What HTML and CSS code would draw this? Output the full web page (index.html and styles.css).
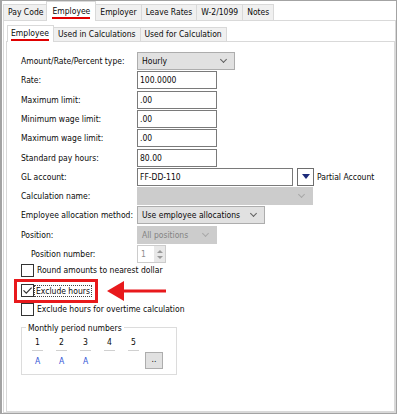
FILE: index.html
```html
<!DOCTYPE html>
<html lang="en">
<head>
<meta charset="UTF-8" />
<title>Pay Code - Employee</title>
<link rel="stylesheet" href="styles.css">
</head>
<body>
<div class="window">
  <!-- Top tabs -->
  <div class="tabs">
    <div class="tab">Pay Code</div>
    <div class="tab active"><span class="mark">Employee</span></div>
    <div class="tab">Employer</div>
    <div class="tab">Leave Rates</div>
    <div class="tab">W-2/1099</div>
    <div class="tab">Notes</div>
  </div>

  <div class="panel">
    <!-- Sub tabs -->
    <div class="tabs sub">
      <div class="tab active"><span class="mark">Employee</span></div>
      <div class="tab">Used in Calculations</div>
      <div class="tab">Used for Calculation</div>
    </div>

    <div class="inner">
      <div class="row">
        <label>Amount/Rate/Percent type:</label>
        <div class="select w98"><span>Hourly</span><i class="chev"></i></div>
      </div>
      <div class="row">
        <label>Rate:</label>
        <div class="input w80">100.0000</div>
      </div>
      <div class="row">
        <label>Maximum limit:</label>
        <div class="input w80">.00</div>
      </div>
      <div class="row">
        <label>Minimum wage limit:</label>
        <div class="input w80">.00</div>
      </div>
      <div class="row">
        <label>Maximum wage limit:</label>
        <div class="input w80">.00</div>
      </div>
      <div class="row">
        <label>Standard pay hours:</label>
        <div class="input w80">80.00</div>
      </div>
      <div class="row">
        <label>GL account:</label>
        <div class="input w156">FF-DD-110</div>
        <div class="drop-btn"><i class="tri"></i></div>
        <span class="note">Partial Account</span>
      </div>
      <div class="row">
        <label>Calculation name:</label>
        <div class="select disabled w176"><span></span><i class="chev"></i></div>
      </div>
      <div class="row">
        <label>Employee allocation method:</label>
        <div class="select w128"><span>Use employee allocations</span><i class="chev"></i></div>
      </div>
      <div class="row">
        <label>Position:</label>
        <div class="select disabled w80"><span>All positions</span><i class="chev"></i></div>
      </div>
      <div class="row">
        <label class="indent">Position number:</label>
        <div class="spin">
          <span>1</span>
          <div class="arrows"><i class="up"></i><i class="down"></i></div>
        </div>
      </div>

      <div class="check-row">
        <span class="box"></span>
        <span class="text">Round amounts to nearest dollar</span>
      </div>
      <div class="callout-row">
        <div class="callout">
          <span class="box">
            <svg width="11" height="11" viewBox="0 0 11 11"><path d="M1.5 5.3 L4.3 8.1 L9.6 2.6" fill="none" stroke="#333" stroke-width="1.2"/></svg>
          </span>
          <span class="focus">Exclude hours</span>
        </div>
        <svg class="arrow" width="60" height="20" viewBox="0 0 60 20">
          <polygon points="0,10 17,0 17,20" fill="#e8191c"/>
          <rect x="16" y="8.5" width="43" height="3" fill="#e8191c"/>
        </svg>
      </div>
      <div class="check-row">
        <span class="box"></span>
        <span class="text">Exclude hours for overtime calculation</span>
      </div>

      <fieldset class="group">
        <legend>Monthly period numbers</legend>
        <div class="periods">
          <div class="period"><span class="num">1</span><span class="val">A</span></div>
          <div class="period"><span class="num">2</span><span class="val">A</span></div>
          <div class="period"><span class="num">3</span><span class="val">A</span></div>
          <div class="period"><span class="num">4</span><span class="val"></span></div>
          <div class="period"><span class="num">5</span><span class="val"></span></div>
          <div class="more">..</div>
        </div>
      </fieldset>
    </div>
  </div>
</div>
</body>
</html>
```

FILE: styles.css
```css
* {
  box-sizing: border-box;
  margin: 0;
  padding: 0;
}
body {
  background: #fff;
  font-family: 'DejaVu Sans Condensed', 'DejaVu Sans', sans-serif;
  font-stretch: condensed;
  font-size: 8.5px;
  color: #0a0a0a;
}
.window {
  width: 397px;
  height: 414px;
  border: 1px solid #a3a3a3;
  border-left-width: 2px;
  display: flex;
  flex-direction: column;
  overflow: hidden;
}

/* Tabs */
.tabs {
  display: flex;
  align-items: flex-end;
  height: 19px;
  padding-left: 1px;
  position: relative;
  z-index: 1;
}
.tab {
  height: 16px;
  padding: 0 4px;
  line-height: 14px;
  background: #f0f0f0;
  border: 1px solid #d9d9d9;
  border-bottom: none;
  margin-right: -1px;
  white-space: nowrap;
}
.tab.active {
  height: 20px;
  background: #fff;
  margin: 0 -1px -1px -1px;
  padding: 3px 5px 0;
  line-height: normal;
  position: relative;
  z-index: 2;
}
.mark {
  display: inline-block;
  line-height: 12px;
  border-bottom: 2px solid #e00000;
}
.panel {
  flex: 1;
  margin-left: 1px;
  border: 1px solid #d9d9d9;
  background: #fff;
  padding: 1px 0 0 2px;
  display: flex;
  flex-direction: column;
}
.tabs.sub {
  height: 19px;
}
.tabs.sub .tab {
  height: 14px;
  line-height: 13px;
  padding: 0 4px;
}
.tabs.sub .tab.active {
  height: 17px;
  margin-left: 0;
  padding: 2px 4px 0 3px;
  line-height: normal;
}
.tabs.sub .mark {
  line-height: 11px;
}
.inner {
  flex: 1;
  border: 1px solid #d9d9d9;
  padding: 9.4px 0 0 14px;
}

/* Form rows */
.row {
  display: flex;
  align-items: center;
  height: 19.3px;
}
.row label {
  width: 116px;
  flex: none;
  white-space: nowrap;
}
.row label.indent {
  padding-left: 10px;
}
.input {
  height: 18px;
  border: 1px solid #7a7a7a;
  background: #fff;
  padding: 0 2px;
  line-height: 16px;
}
.select {
  height: 18px;
  border: 1px solid #adadad;
  background: #e1e1e1;
  padding: 0 2px 0 4px;
  display: flex;
  align-items: center;
  justify-content: space-between;
  white-space: nowrap;
}
.select.disabled {
  background: #cccccc;
  border-color: #cccccc;
  color: #838383;
}
.chev {
  width: 5px;
  height: 5px;
  border-right: 1px solid #606060;
  border-bottom: 1px solid #606060;
  transform: rotate(45deg);
  margin: -3px 6px 0 0;
}
.select.disabled .chev {
  border-color: #a8a8a8;
}
.w80 { width: 80px; }
.w98 { width: 98px; }
.w128 { width: 128px; }
.w156 { width: 156px; }
.w176 { width: 176px; }
.drop-btn {
  width: 17px;
  height: 18px;
  border: 1px solid #6e6e6e;
  margin-left: 4px;
  display: flex;
  align-items: center;
  justify-content: center;
}
.tri {
  border-left: 4px solid transparent;
  border-right: 4px solid transparent;
  border-top: 5px solid #1b2a7a;
}
.note {
  margin-left: 3px;
}
.spin {
  width: 29px;
  height: 18px;
  border: 1px solid #cccccc;
  background: #fff;
  color: #8d8d8d;
  display: flex;
  align-items: center;
  justify-content: space-between;
  padding-left: 3px;
}
.arrows {
  width: 11px;
  height: 16px;
  background: #e8e8e8;
  display: flex;
  flex-direction: column;
  align-items: center;
  justify-content: center;
  gap: 3px;
}
.up, .down {
  border-left: 3px solid transparent;
  border-right: 3px solid transparent;
}
.up { border-bottom: 3px solid #9a9a9a; }
.down { border-top: 3px solid #9a9a9a; }

/* Checkboxes */
.check-row {
  display: flex;
  align-items: center;
  height: 13px;
}
.box {
  width: 13px;
  height: 13px;
  border: 1px solid #333;
  background: #fff;
  display: inline-flex;
  align-items: center;
  justify-content: center;
  flex: none;
}
.check-row .text {
  margin-left: 3px;
}
.callout-row {
  display: flex;
  align-items: center;
  height: 24px;
  margin-top: 2.3px;
}
.callout {
  display: flex;
  align-items: center;
  height: 24px;
  margin-left: -7px;
  padding: 0 3px 0 4px;
  border: 3px solid #e8191c;
}
.focus {
  border: 1px dotted #444;
  padding: 0 1px;
  line-height: 10px;
}
.arrow {
  margin-left: 9px;
}

/* Group box */
.group {
  width: 156px;
  margin-top: 6px;
  border: 1px solid #dcdcdc;
  padding: 0 0 5px 10px;
}
.group legend {
  padding: 0 2px;
  margin-left: -6px;
  line-height: 12px;
}
.periods {
  display: flex;
  align-items: flex-start;
  margin-top: 2px;
}
.period {
  width: 24px;
  display: flex;
  flex-direction: column;
}
.num {
  width: 11px;
  height: 15px;
  line-height: 13px;
  text-align: center;
  border-bottom: 1px solid #d0d0d0;
}
.val {
  width: 11px;
  height: 12px;
  margin-top: 4px;
  line-height: 12px;
  text-align: center;
  color: #2f52d6;
}
.more {
  width: 18px;
  height: 17px;
  margin: 16px 0 0 -7px;
  border: 1px solid #adadad;
  background: #e1e1e1;
  text-align: center;
  line-height: 12px;
}
```
